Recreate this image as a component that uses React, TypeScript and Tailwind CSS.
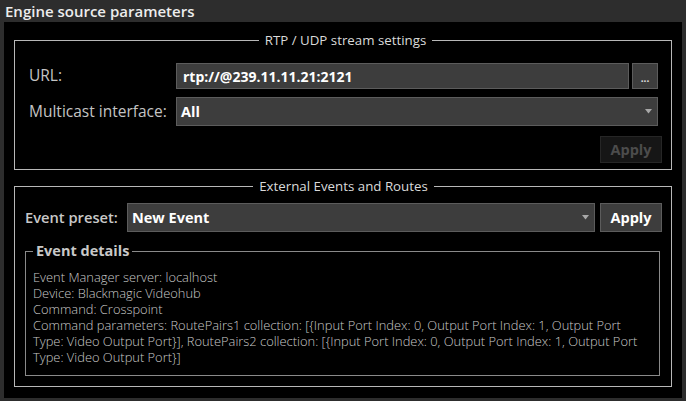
import { useState } from "react";

const detailLines = [
  "Event Manager server: localhost",
  "Device: Blackmagic Videohub",
  "Command: Crosspoint",
  "Command parameters: RoutePairs1 collection: [{Input Port Index: 0, Output Port Index: 1, Output Port",
  "Type: Video Output Port}], RoutePairs2 collection: [{Input Port Index: 0, Output Port Index: 1, Output Port",
  "Type: Video Output Port}]",
];

function Arrow() {
  return (
    <svg width="7" height="5" viewBox="0 0 7 5" className="shrink-0">
      <path d="M0 0h7L3.5 4.5z" fill="#a8a8a8" />
    </svg>
  );
}

function Select({ value, className }: { value: string; className?: string }) {
  return (
    <div
      className={
        "flex items-center justify-between bg-[#3d3d3d] border border-[#5c5c5c] pl-[4px] pr-[5px] " +
        (className ?? "")
      }
    >
      <span className="text-[14.5px] font-bold text-white">{value}</span>
      <Arrow />
    </div>
  );
}

export default function App() {
  const [url] = useState("rtp://@239.11.11.21:2121");

  return (
    <div
      className="w-[686px] h-[401px] bg-[#2d2d2d] flex flex-col overflow-hidden"
      style={{ fontFamily: '"Open Sans", "Noto Sans", sans-serif' }}
    >
      <div className="h-[22px] pl-[5px] flex items-center text-[15px] font-semibold text-[#ececec]">
        Engine source parameters
      </div>

      <div className="mx-[4px] mb-[3px] flex-1 bg-black px-[10px] pt-[10px]">
        {/* RTP / UDP */}
        <fieldset className="border border-[#b8b8b8] pl-[14px] pr-[9px] pb-[5px] h-[138px]">
          <legend className="mx-auto px-[6px] text-[13.3px] leading-[16px] text-[#dadada]">
            RTP / UDP stream settings
          </legend>
          <div className="pt-[15px] pr-[4px] grid grid-cols-[147px_1fr] gap-y-[8px] items-center">
            <span className="text-[15.5px] text-[#c4c4c4]">URL:</span>
            <div className="flex gap-[3px] h-[26px]">
              <div className="flex-1 flex items-center bg-[#3d3d3d] border border-[#5c5c5c] pl-[6px]">
                <span className="text-[14px] font-bold text-white">{url}</span>
              </div>
              <div className="w-[26px] flex items-end justify-center pb-[6px] bg-[#3d3d3d] border border-[#5c5c5c] text-[10px] leading-[8px] font-bold text-[#e0e0e0]">
                ...
              </div>
            </div>
            <span className="text-[15.5px] text-[#c4c4c4]">Multicast interface:</span>
            <Select value="All" className="h-[29px]" />
          </div>
          <div className="flex justify-end mt-[10px]">
            <div className="w-[62px] h-[27px] flex items-center justify-center bg-[#161616] border border-[#262626] text-[14.5px] font-bold text-[#4c4c4c]">
              Apply
            </div>
          </div>
        </fieldset>

        {/* External events */}
        <fieldset className="mt-[8px] border border-[#b8b8b8] pl-[10px] pr-[9px] pb-[10px] h-[209px]">
          <legend className="mx-auto px-[6px] text-[13.3px] leading-[16px] text-[#dadada]">
            External Events and Routes
          </legend>
          <div className="pt-[9px] flex items-center h-[38px] gap-[5px]">
            <span className="w-[97px] text-[14.7px] font-semibold text-[#c8c8c8]">Event preset:</span>
            <Select value="New Event" className="h-[29px] flex-1" />
            <div className="w-[62px] h-[29px] flex items-center justify-center bg-[#3d3d3d] border border-[#5c5c5c] text-[14.5px] font-bold text-white">
              Apply
            </div>
          </div>

          <fieldset className="mt-[9px] mr-[2px] border border-[#8a8a8a] pl-[7px] pb-[10px] h-[135px]">
            <legend className="ml-0 px-[3px] text-[14.5px] leading-[20px] font-bold text-[#c8c8c8]">
              Event details
            </legend>
            <div className="pt-[8px] text-[12.9px] leading-[16px] text-[#c8c8c8] font-light">
              {detailLines.map((l) => (
                <div key={l} className="whitespace-nowrap">
                  {l}
                </div>
              ))}
            </div>
          </fieldset>
        </fieldset>
      </div>
    </div>
  );
}
